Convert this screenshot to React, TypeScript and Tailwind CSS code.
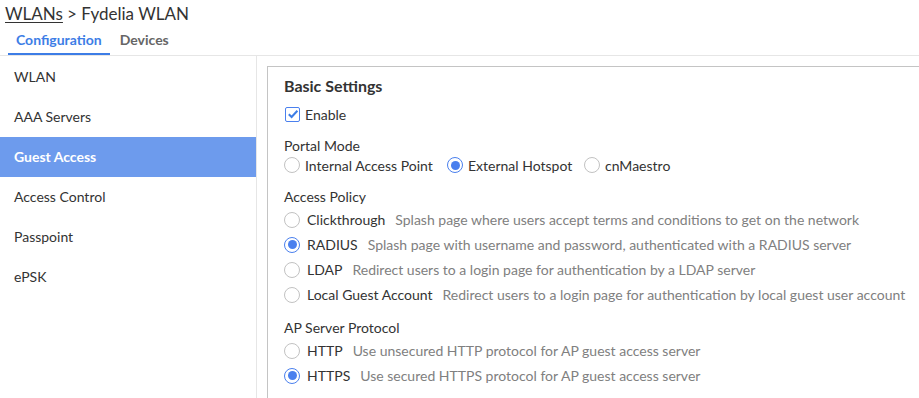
import React from 'react';

const font = { fontFamily: 'Lato, "Open Sans", sans-serif' };

function Radio({ checked }: { checked?: boolean }) {
    return (
        <span
            className={
                'w-[16px] h-[16px] rounded-full flex items-center justify-center shrink-0 bg-white ' +
                (checked ? 'border-[1.5px] border-[#4a80ee]' : 'border border-[#c2c2c2]')
            }
        >
            {checked && <span className="w-[9px] h-[9px] rounded-full bg-[#4a80ee]" />}
        </span>
    );
}

function Option({ label, desc, checked }: { label: string; desc: string; checked?: boolean }) {
    return (
        <div className="h-[25px] flex items-center">
            <Radio checked={checked} />
            <span className="text-[#333] ml-[7px]">{label}</span>
            <span className="text-[#808080] ml-[10px]">{desc}</span>
        </div>
    );
}

export default function App() {
    const menu = ['WLAN', 'AAA Servers', 'Guest Access', 'Access Control', 'Passpoint', 'ePSK'];
    return (
        <div className="w-[919px] h-[398px] bg-white overflow-hidden text-[14px] text-[#333]" style={font}>
            {/* Breadcrumb */}
            <div className="h-[28px] pl-[5px] flex items-center text-[17px] text-[#333]">
                <span className="underline underline-offset-2">WLANs</span>
                <span className="ml-[4px]">&gt; Fydelia WLAN</span>
            </div>

            {/* Tabs */}
            <div className="h-[28px] flex items-end border-b border-[#e6e6e6] pl-[8px]">
                <div className="h-[28px] pb-[2px] px-[8px] flex items-center font-bold text-[#3d7de6] border-b-2 border-[#3d7de6]">
                    Configuration
                </div>
                <div className="h-[28px] pb-[4px] px-[10px] flex items-center font-bold text-[#666]">Devices</div>
            </div>

            <div className="flex h-[342px]">
                {/* Sidebar */}
                <div className="w-[257px] shrink-0 border-r border-[#e6e6e6] pt-[1px]">
                    {menu.map((m) => (
                        <div
                            key={m}
                            className={
                                'h-[40px] pl-[14px] pb-[2px] flex items-center ' +
                                (m === 'Guest Access' ? 'bg-[#6d9bed] text-white font-bold' : 'text-[#333]')
                            }
                        >
                            {m}
                        </div>
                    ))}
                </div>

                {/* Content */}
                <div className="flex-1 pl-[10px] pt-[10px]">
                    <div className="border-l border-t border-[#c4c4c4] h-full pl-[16px] pt-[7px]">
                        <div className="text-[16px] font-bold text-[#333] h-[24px] flex items-center">Basic Settings</div>
                        <div className="h-[32px] flex items-center">
                            <span className="w-[15px] h-[15px] ml-[1px] border border-[#4a80ee] rounded-[2px] flex items-center justify-center">
                                <svg width="12" height="12" viewBox="0 0 12 12">
                                    <path d="M1.8 6.2l2.8 2.8L10.4 2.8" stroke="#3d7de6" strokeWidth="2" fill="none" />
                                </svg>
                            </span>
                            <span className="ml-[5px]">Enable</span>
                        </div>

                        <div className="h-[20px] mt-[5px] flex items-center">Portal Mode</div>
                        <div className="h-[20px] flex items-center">
                            <div className="flex items-center gap-[5px] w-[163px]">
                                <Radio />
                                <span>Internal Access Point</span>
                            </div>
                            <div className="flex items-center gap-[5px] w-[137px]">
                                <Radio checked />
                                <span>External Hotspot</span>
                            </div>
                            <div className="flex items-center gap-[5px]">
                                <Radio />
                                <span>cnMaestro</span>
                            </div>
                        </div>

                        <div className="h-[22px] mt-[10px] flex items-center">Access Policy</div>
                        <Option label="Clickthrough" desc="Splash page where users accept terms and conditions to get on the network" />
                        <Option label="RADIUS" desc="Splash page with username and password, authenticated with a RADIUS server" checked />
                        <Option label="LDAP" desc="Redirect users to a login page for authentication by a LDAP server" />
                        <Option label="Local Guest Account" desc="Redirect users to a login page for authentication by local guest user account" />

                        <div className="h-[22px] mt-[9px] flex items-center">AP Server Protocol</div>
                        <Option label="HTTP" desc="Use unsecured HTTP protocol for AP guest access server" />
                        <Option label="HTTPS" desc="Use secured HTTPS protocol for AP guest access server" checked />
                    </div>
                </div>
            </div>
        </div>
    );
}
